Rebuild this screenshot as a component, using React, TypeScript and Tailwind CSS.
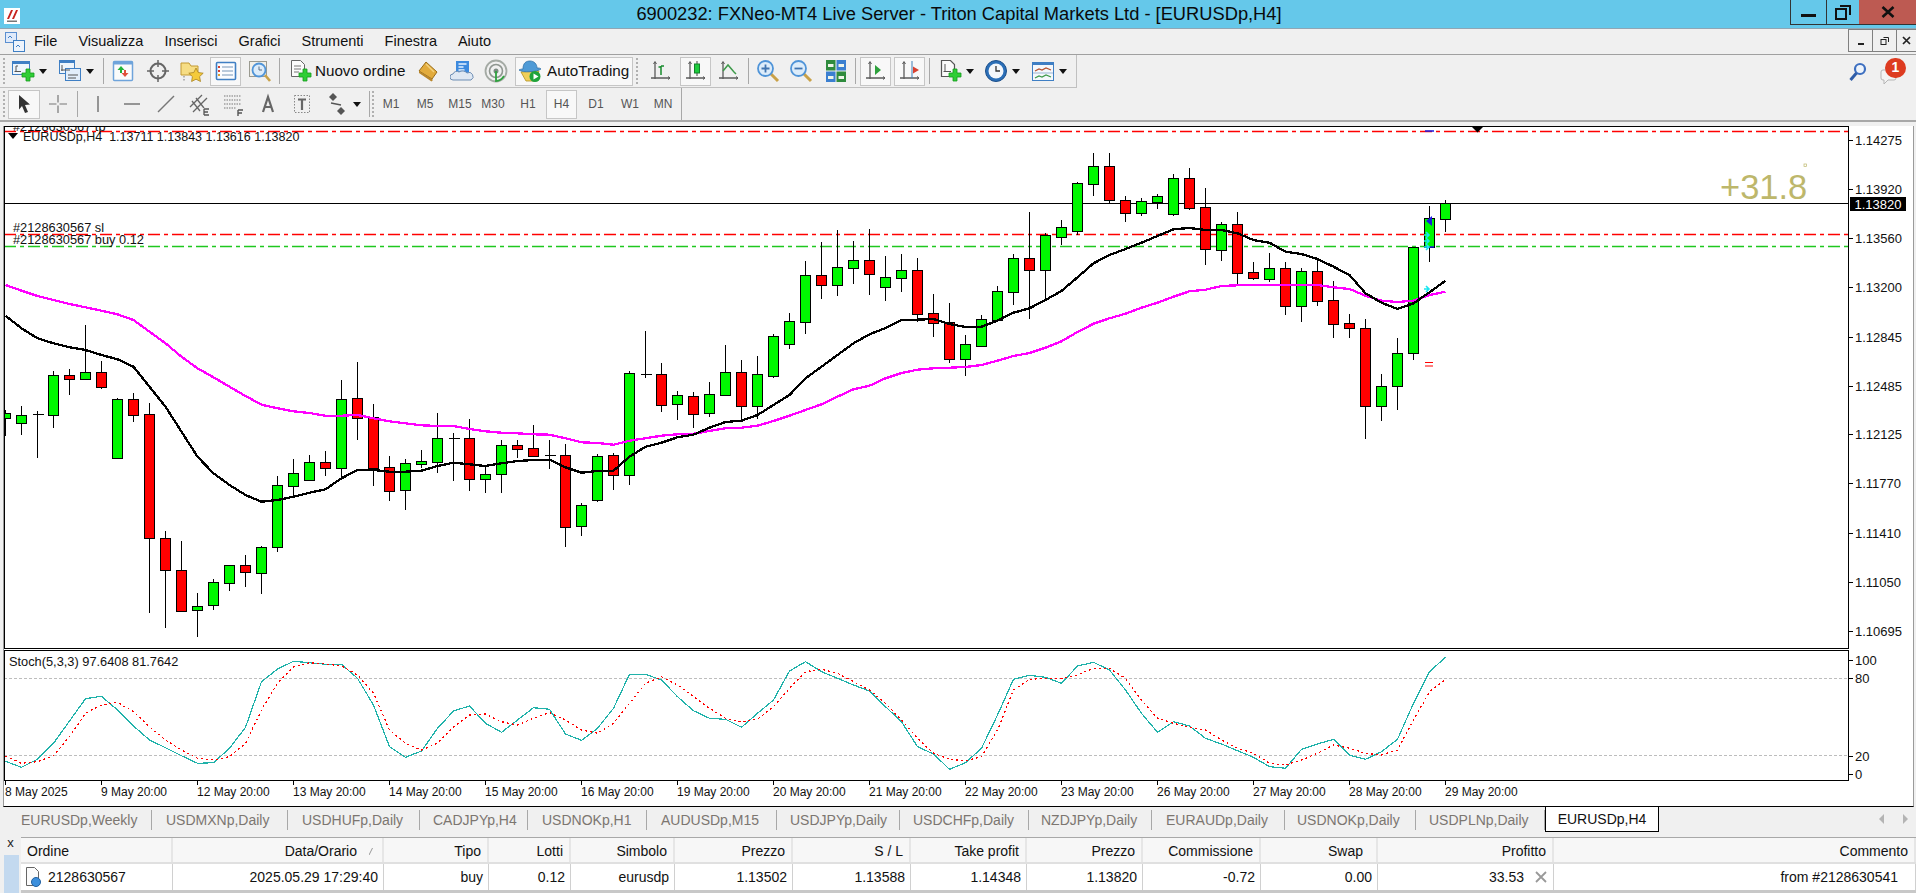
import type { ReactNode } from "react"

type Bar = [number, number, number, number, number]

// wick top, body top, body bottom, wick bottom, 1 = bull
const barsA: Bar[] = [
  [450, 460, 475, 527, 1], [438, 466, 488, 524, 1], [453, 463, 466, 594, 2], [334, 346, 464, 504, 1],
  [327, 346, 356, 405, 0], [195, 337, 356, 359, 1], [303, 337, 380, 387, 0], [414, 418, 593, 593, 1],
  [399, 418, 464, 486, 0], [430, 463, 835, 1058, 0], [813, 835, 931, 1104, 0], [843, 931, 1052, 1056, 0],
  [999, 1039, 1049, 1131, 1], [957, 967, 1036, 1050, 1], [916, 916, 970, 993, 1], [885, 916, 937, 981, 0],
  [858, 862, 938, 1002, 1], [648, 676, 862, 876, 1], [597, 640, 677, 708, 1], [585, 607, 661, 661, 1],
  [573, 607, 623, 648, 0], [360, 418, 623, 655, 1], [306, 415, 473, 540, 0], [432, 472, 623, 678, 0],
  [588, 622, 692, 723, 0], [597, 610, 689, 749, 1], [570, 604, 611, 624, 1], [459, 535, 605, 639, 1],
  [519, 535, 536, 663, 2], [477, 535, 656, 693, 0], [618, 643, 656, 699, 1], [541, 556, 641, 699, 1],
  [540, 556, 566, 595, 0], [495, 565, 587, 590, 0], [540, 586, 587, 627, 2], [552, 586, 800, 861, 0],
  [729, 736, 797, 828, 1], [583, 589, 719, 725, 1], [579, 586, 644, 690, 0], [334, 340, 644, 675, 1],
]

const barsB: Bar[] = [
  [603, 731, 733, 744, 2], [699, 733, 824, 846, 0], [783, 796, 821, 870, 1], [786, 799, 851, 894, 0],
  [756, 793, 848, 861, 1], [645, 727, 795, 798, 1], [690, 727, 829, 870, 0], [678, 733, 829, 866, 1],
  [613, 619, 738, 744, 1], [549, 574, 641, 657, 1], [393, 436, 575, 612, 1], [336, 436, 464, 507, 0],
  [300, 412, 464, 498, 1], [333, 391, 413, 462, 1], [297, 391, 431, 495, 0], [378, 442, 470, 513, 1],
  [372, 421, 443, 486, 1], [384, 421, 551, 576, 0], [492, 550, 578, 621, 0], [519, 577, 686, 699, 0],
  [615, 643, 686, 738, 1], [555, 568, 647, 647, 1], [468, 484, 569, 569, 1], [372, 385, 485, 525, 1],
  [246, 385, 419, 567, 0], [309, 316, 419, 507, 1], [270, 292, 320, 345, 1], [156, 160, 302, 314, 1],
  [69, 109, 161, 198, 1], [69, 109, 209, 220, 0], [198, 211, 248, 276, 0], [205, 214, 248, 258, 1],
  [193, 199, 215, 237, 1], [132, 145, 251, 258, 1], [114, 145, 233, 240, 0], [174, 232, 356, 405, 0],
  [276, 283, 359, 393, 1], [246, 283, 428, 462, 0], [396, 427, 443, 450, 0], [369, 415, 446, 456, 1],
  [396, 415, 529, 555, 0], [414, 424, 529, 576, 1], [390, 424, 512, 528, 0], [453, 511, 581, 624, 0],
  [552, 580, 593, 624, 0], [567, 595, 827, 927, 0], [732, 769, 827, 873, 1], [624, 670, 769, 840, 1],
  [352, 352, 670, 690, 1], [228, 265, 352, 396, 1], [210, 219, 266, 306, 1],
]

const blackA = [167, 205, 235, 250, 262, 270, 285, 298, 320, 380, 440, 515, 590, 640, 675, 705, 725, 720, 710, 698, 688, 655, 630, 630, 635, 635, 632, 618, 608, 613, 618, 610, 603, 600, 599, 622, 638, 633, 632, 590]
const blackB = [950, 938, 922, 914, 893, 876, 872, 855, 825, 795, 745, 710, 675, 640, 613, 594, 570, 569, 567, 582, 591, 590, 572, 548, 535, 510, 483, 442, 400, 375, 357, 338, 318, 298, 294, 300, 300, 310, 330, 338, 365, 372, 387, 410, 435, 490, 518, 537, 520, 487, 452]
const pinkA = [75, 92, 108, 120, 132, 142, 152, 163, 180, 215, 250, 290, 325, 352, 380, 408, 434, 445, 454, 459, 467, 467, 465, 475, 484, 490, 496, 498, 498, 507, 514, 518, 520, 523, 524, 535, 547, 549, 554, 542]
const pinkB = [925, 917, 913, 911, 903, 895, 893, 887, 873, 857, 840, 823, 800, 778, 767, 745, 729, 719, 715, 713, 711, 705, 692, 678, 669, 653, 634, 606, 581, 565, 551, 533, 518, 500, 484, 479, 468, 466, 465, 465, 465, 465, 465, 472, 477, 497, 512, 516, 512, 495, 485]

const stochMain = [364, 382, 358, 310, 243, 176, 169, 210, 258, 300, 323, 347, 370, 368, 325, 262, 125, 87, 64, 68, 73, 73, 115, 195, 320, 352, 333, 265, 213, 198, 250, 277, 240, 203, 208, 282, 301, 265, 205, 103, 103, 120, 170, 212, 235, 238, 262, 220, 180, 93, 65, 95, 115, 135, 153, 200, 245, 320, 342, 388, 368, 325, 225, 118, 106, 112, 130, 78, 67, 90, 150, 220, 277, 245, 258, 295, 312, 332, 352, 380, 385, 328, 312, 298, 346, 358, 335, 298, 190, 95, 52]
const stochSignal = [348, 370, 365, 347, 290, 220, 195, 187, 215, 260, 300, 330, 355, 360, 350, 310, 210, 130, 80, 68, 72, 78, 105, 160, 270, 310, 330, 310, 260, 225, 222, 245, 255, 235, 218, 240, 270, 280, 250, 190, 130, 110, 135, 170, 205, 235, 245, 238, 200, 145, 95, 88, 100, 125, 150, 190, 240, 295, 340, 358, 362, 350, 270, 150, 118, 115, 115, 105, 85, 85, 115, 180, 235, 250, 262, 270, 300, 325, 340, 370, 375, 360, 340, 315, 325, 340, 345, 330, 240, 155, 118]

const barX = (i: number) => Math.floor(5.3 + 16 * i) + 0.5

const polyline = (a: number[], baseA: number, b: number[] = [], baseB = 0) =>
  [...a.map((v) => v / 3 + baseA), ...b.map((v) => v / 3 + baseB)].map((y, i) => `${barX(i)},${y.toFixed(1)}`).join(" ")

const priceLabels: [string, number][] = [
  ["1.14275", 140], ["1.13920", 189], ["1.13560", 238], ["1.13200", 287], ["1.12845", 337],
  ["1.12485", 386], ["1.12125", 434], ["1.11770", 483], ["1.11410", 533], ["1.11050", 582], ["1.10695", 631],
]

const timeLabels = ["8 May 2025", "9 May 20:00", "12 May 20:00", "13 May 20:00", "14 May 20:00", "15 May 20:00", "16 May 20:00", "19 May 20:00", "20 May 20:00", "21 May 20:00", "22 May 20:00", "23 May 20:00", "26 May 20:00", "27 May 20:00", "28 May 20:00", "29 May 20:00"]

const tabs: [string, string][] = [
  ["EURUSDp,Weekly", "w-[152px] pl-[21px]"], ["USDMXNp,Daily", "w-[136px] pl-[14px]"], ["USDHUFp,Daily", "w-[132px] pl-[14px]"],
  ["CADJPYp,H4", "w-[108px] pl-[13px]"], ["USDNOKp,H1", "w-[119px] pl-[14px]"], ["AUDUSDp,M15", "w-[130px] pl-[14px]"],
  ["USDJPYp,Daily", "w-[123px] pl-[13px]"], ["USDCHFp,Daily", "w-[129px] pl-[13px]"], ["NZDJPYp,Daily", "w-[123px] pl-[12px]"],
  ["EURAUDp,Daily", "w-[133px] pl-[14px]"], ["USDNOKp,Daily", "w-[131px] pl-[12px]"], ["USDPLNp,Daily", "w-[129px] pl-[13px]"],
]

const menus = ["File", "Visualizza", "Inserisci", "Grafici", "Strumenti", "Finestra", "Aiuto"]

const columns: [string, string, string][] = [
  ["Ordine", "2128630567", "w-[152px]"], ["Data/Orario", "2025.05.29 17:29:40", "w-[211px]"], ["Tipo", "buy", "w-[105px]"],
  ["Lotti", "0.12", "w-[82px]"], ["Simbolo", "eurusdp", "w-[104px]"], ["Prezzo", "1.13502", "w-[118px]"],
  ["S / L", "1.13588", "w-[118px]"], ["Take profit", "1.14348", "w-[116px]"], ["Prezzo", "1.13820", "w-[116px]"],
  ["Commissione", "-0.72", "w-[118px]"], ["Swap", "0.00", "w-[117px]"], ["Profitto", "33.53", "w-[176px]"], ["Commento", "from #2128630541", "flex-1"],
]

function Caret() {
  return (
    <svg width="8" height="5" viewBox="0 0 8 5" className="mx-[1px]">
      <path d="M0 0h8L4 5z" fill="#111" />
    </svg>
  )
}

function Grip({ className = "" }: { className?: string }) {
  return <div className={`h-[26px] w-[3px] border-l-2 border-dotted border-[#b0b0b0] ${className}`} />
}

function Sep({ className = "" }: { className?: string }) {
  return <div className={`h-[26px] w-px bg-[#a8a8a8] ${className}`} />
}

function Btn({ children, active, className = "" }: { children?: ReactNode; active?: boolean; className?: string }) {
  return (
    <div
      className={`flex h-[29px] w-[30px] shrink-0 items-center justify-center ${
        active ? "border border-[#c6c6c6] bg-[#f8f8f8]" : ""
      } ${className}`}
    >
      {children}
    </div>
  )
}

const Ico = ({ children }: { children: ReactNode }) => (
  <svg width="24" height="24" viewBox="0 0 24 24" fill="none">
    {children}
  </svg>
)

const plus = <path d="M15 10h4v4h4v4h-4v4h-4v-4h-4v-4h4z" fill="#2fce35" stroke="#149a1c" strokeWidth="0.8" />

const Axes = ({ children }: { children?: ReactNode }) => (
  <Ico>
    <path d="M6 3v17M2 19h19" stroke="#5b5b5b" strokeWidth="1.3" />
    <path d="M4.5 5 6 2.5 7.500 5M19 17.500l2 1.500-2 1.500" stroke="#5b5b5b" />
    {children}
  </Ico>
)

const icons = {
  newChart: (
    <Ico>
      <rect x="1.500" y="2.500" width="17" height="13" fill="#eef5fc" stroke="#3f7fc4" />
      <rect x="1.500" y="2.500" width="17" height="2.500" fill="#3f7fc4" />
      <path d="M5 7v6M3.500 12.500H10M5 7h2" stroke="#555" />
      {plus}
    </Ico>
  ),
  profiles: (
    <Ico>
      <rect x="1.500" y="1.500" width="15" height="13" fill="#eef5fc" stroke="#3f7fc4" />
      <rect x="1.500" y="1.500" width="15" height="2.500" fill="#3f7fc4" />
      <rect x="7.500" y="9.500" width="15" height="12" fill="#e2eefb" stroke="#3f7fc4" />
      <path d="M4 6v6M3 11h9M10 16h10M10 19h8" stroke="#555" />
    </Ico>
  ),
  market: (
    <Ico>
      <rect x="2.500" y="2.500" width="19" height="19" rx="1" fill="#fbfbfb" stroke="#6fa4db" strokeWidth="1.500" />
      <rect x="2.500" y="2.500" width="19" height="3" fill="#6fa4db" />
      <path d="M10 7l-3.500 4H9v3h2v-3h2.500z" fill="#22b43a" />
      <path d="M14 18l3.500-4H15v-3h-2v3h-2.500z" fill="#e0503c" />
    </Ico>
  ),
  crosshair: (
    <Ico>
      <circle cx="12" cy="12" r="7.500" stroke="#666" strokeWidth="2" />
      <path d="M12 1v7M12 16v7M1 12h7M16 12h7" stroke="#666" strokeWidth="1.500" />
    </Ico>
  ),
  folderStar: (
    <Ico>
      <path d="M1 4h8l2 3h7v9H1z" fill="#f6dd84" stroke="#c39a33" />
      <path d="M16 9l2.200 4.500 5 .7-3.600 3.400.9 4.900-4.500-2.300-4.400 2.300.8-4.900-3.600-3.400 5-.7z" fill="#f4ca3a" stroke="#a98320" strokeWidth="0.800" />
      <path d="M4 17v6" stroke="#777" strokeDasharray="1.500 1.500" />
    </Ico>
  ),
  navigator: (
    <Ico>
      <rect x="2.500" y="3.500" width="19" height="17" rx="1" fill="#fafcff" stroke="#3f7fc4" strokeWidth="1.600" />
      <path d="M5 7v2M5 11v2" stroke="#d8402f" strokeWidth="2" />
      <path d="M5 15v2" stroke="#e0a030" strokeWidth="2" />
      <path d="M8 8h11M8 12h11M8 16h11" stroke="#7795b8" strokeWidth="1.200" />
    </Ico>
  ),
  terminal: (
    <Ico>
      <rect x="1.500" y="2.500" width="17" height="15" fill="#f1efe8" stroke="#9a9a90" />
      <path d="M17 16l5 6" stroke="#c9a148" strokeWidth="2.600" />
      <circle cx="11" cy="11" r="6.500" fill="#dcecfa" stroke="#4f94d8" strokeWidth="1.800" />
      <path d="M11 7.500V11h3" stroke="#5b6f86" />
    </Ico>
  ),
  order: (
    <Ico>
      <path d="M3.500 1.500h9l4 4v12h-13z" fill="#fbfbfb" stroke="#666" />
      <path d="M6 7h7M6 10h7M6 13h5" stroke="#777" />
      {plus}
    </Ico>
  ),
  gold: (
    <Ico>
      <path d="M10 3l11 10-5 7L3 12z" fill="#e2ab3c" stroke="#9a6d18" />
      <path d="M3 12l13 8 1 1-1.500 1.500L3 14z" fill="#b9862a" />
      <path d="M10 5l8 8" stroke="#f4d27c" strokeWidth="1.500" />
    </Ico>
  ),
  cloud: (
    <Ico>
      <path d="M6 2h13v14H6z" fill="#3d8ade" />
      <path d="M8.500 5h8M8.500 8h5M8.500 11h6" stroke="#e6f2ff" strokeWidth="1.400" />
      <path d="M3 21a3 3 0 0 1 0-6 4 4 0 0 1 6-2 6 6 0 0 1 8 1 3.500 3.500 0 0 1 4 7z" fill="#dfe8f3" stroke="#6d8db3" />
    </Ico>
  ),
  signal: (
    <Ico>
      <circle cx="12" cy="12" r="10.500" stroke="#a4aaa4" strokeWidth="1.800" />
      <circle cx="12" cy="12" r="6.500" stroke="#8f9690" strokeWidth="1.600" />
      <circle cx="12" cy="12" r="2.500" fill="#7d8a82" />
      <path d="M12 12v10c3 0 6-2 8-5" stroke="#2fa23f" strokeWidth="1.800" />
    </Ico>
  ),
  auto: (
    <Ico>
      <path d="M3 13l18-1-4 10H8z" fill="#f0cf5a" stroke="#b0901f" strokeWidth="0.800" />
      <path d="M1 11c2-1 3-1 4-1 0-6 3-8 7-8s7 3 7 7c2 0 3 0 4 1-4 3-18 4-22 1z" fill="#4e9ad6" stroke="#3273aa" strokeWidth="0.800" />
      <circle cx="17" cy="17.500" r="5.500" fill="#1fa33a" />
      <path d="M15.500 14.500v6l5-3z" fill="#fff" />
    </Ico>
  ),
  bars: (
    <Axes>
      <path d="M12 7v9M12 8H9.500M12 7h3" stroke="#178a2c" strokeWidth="1.500" />
    </Axes>
  ),
  candles: (
    <Axes>
      <path d="M13 2v15" stroke="#444" />
      <rect x="10.500" y="5" width="5" height="9" fill="#1dcc3c" stroke="#12802a" />
    </Axes>
  ),
  line: (
    <Axes>
      <path d="M6 12l5-6 6 7 2 2" stroke="#3e9a4a" strokeWidth="1.500" />
    </Axes>
  ),
  zoomIn: (
    <Ico>
      <path d="M15 15l7 7" stroke="#c9a148" strokeWidth="3" />
      <circle cx="9.500" cy="9.500" r="7.500" fill="#dcecfa" stroke="#4f94d8" strokeWidth="1.800" />
      <path d="M5.500 9.500h8M9.500 5.500v8" stroke="#3f74b0" strokeWidth="1.800" />
    </Ico>
  ),
  zoomOut: (
    <Ico>
      <path d="M15 15l7 7" stroke="#c9a148" strokeWidth="3" />
      <circle cx="9.500" cy="9.500" r="7.500" fill="#dcecfa" stroke="#4f94d8" strokeWidth="1.800" />
      <path d="M5.500 9.500h8" stroke="#3f74b0" strokeWidth="1.800" />
    </Ico>
  ),
  tile: (
    <Ico>
      <rect x="2" y="1" width="9.500" height="10.500" fill="#2f8b3d" />
      <rect x="12.500" y="1" width="9.500" height="10.500" fill="#3b7fd0" />
      <rect x="2" y="12.500" width="9.500" height="10.500" fill="#3b7fd0" />
      <rect x="12.500" y="12.500" width="9.500" height="10.500" fill="#2f8b3d" />
      <path d="M4 5h5.500v3H4zM14.500 5H20v3h-5.500zM4 17h5.500v3H4zM14.500 17H20v3h-5.500z" fill="#eef5ea" />
    </Ico>
  ),
  scroll: (
    <Axes>
      <path d="M11 6l6 5-6 5z" fill="#2da13c" />
    </Axes>
  ),
  shift: (
    <Axes>
      <path d="M14 2v17" stroke="#3e7fb8" />
      <path d="M21 11l-6-3.500v7z" fill="#d8402f" />
    </Axes>
  ),
  indicators: (
    <Ico>
      <path d="M3.500 1.500h9l4 4v12h-13z" fill="#fafafa" stroke="#555" strokeWidth="1.200" />
      <path d="M7 5v8M5.500 12.500H13" stroke="#555" />
      {plus}
    </Ico>
  ),
  clock: (
    <Ico>
      <circle cx="12" cy="12" r="10.500" fill="#2b6fb8" stroke="#1c4f8a" />
      <circle cx="12" cy="12" r="7.500" fill="#f4f7fb" />
      <path d="M12 7v5h4" stroke="#333" strokeWidth="1.300" />
    </Ico>
  ),
  template: (
    <Ico>
      <rect x="1.500" y="3.500" width="21" height="18" fill="#f5f8fc" stroke="#3f7fc4" />
      <rect x="1.500" y="3.500" width="21" height="2.500" fill="#3f7fc4" />
      <path d="M4 12l4-2 3 1 4-2 5 2" stroke="#b5502f" strokeWidth="1.200" />
      <path d="M2 14h20" stroke="#9bb6d3" />
      <path d="M4 19l4-2 3 1 4-2 5 2" stroke="#3e9a4a" strokeWidth="1.200" />
    </Ico>
  ),
  cursor: (
    <Ico>
      <path d="M7 3l11 9.500-5 .5 3 7-3 1-3-7-3 3.500z" fill="#333" />
    </Ico>
  ),
  cross: (
    <Ico>
      <path d="M12 3v7.500M12 13.500V21M3 12h7.500M13.500 12H21" stroke="#777" strokeWidth="1.200" />
    </Ico>
  ),
  vline: (
    <Ico>
      <path d="M12 4v16" stroke="#777" strokeWidth="1.500" />
    </Ico>
  ),
  hline: (
    <Ico>
      <path d="M4 12h16" stroke="#777" strokeWidth="1.500" />
    </Ico>
  ),
  trend: (
    <Ico>
      <path d="M4 20L20 4" stroke="#777" strokeWidth="1.500" />
    </Ico>
  ),
  channel: (
    <Ico>
      <path d="M2 15l12-12M5 20l14-14M4 9l8 10M8 6l8 10" stroke="#666" strokeWidth="1.300" />
      <path d="M16 17h5M16 17v6M16 20h4M16 23h5" stroke="#555" strokeWidth="1.300" />
    </Ico>
  ),
  fib: (
    <Ico>
      <path d="M3 4h17M3 8h17M3 12h17M3 16h12" stroke="#777" strokeDasharray="1.500 1" />
      <path d="M17 18h5M17 18v6M17 21h4" stroke="#555" strokeWidth="1.400" />
    </Ico>
  ),
  textA: (
    <Ico>
      <path d="M7 20l5-15 5 15M9 15h6" stroke="#666" strokeWidth="2.200" />
    </Ico>
  ),
  textT: (
    <Ico>
      <rect x="4.500" y="3.500" width="15" height="17" stroke="#888" strokeDasharray="1.500 1.500" />
      <path d="M8 7.500h8M12 7.500V18" stroke="#666" strokeWidth="2.200" />
    </Ico>
  ),
  arrows: (
    <Ico>
      <path d="M8 1l4 4-4 4-4-4zM16 15l4 4-4 4-4-4z" fill="#555" />
      <path d="M6 11l10 2" stroke="#555" strokeWidth="1.400" />
    </Ico>
  ),
}

function TitleBar() {
  return (
    <div className="relative flex h-[29px] shrink-0 items-start border-b border-[#8fa6b5] bg-[#65c8ea]">
      <div className="ml-[4px] mt-[8px] flex h-[16px] w-[16px] items-center justify-center bg-white">
        <svg width="14" height="14" viewBox="0 0 14 14">
          <path d="M2 10L6 1h2L4 10zM7 10l4-9h2L9 10z" fill="#c8231e" />
          <rect x="2" y="11.500" width="10" height="1.500" fill="#777" />
        </svg>
      </div>
      <div className="flex-1 pt-[2px] pl-[108px] text-center text-[18.300px] leading-[24px] text-[#0a0a0a]">
        6900232: FXNeo-MT4 Live Server - Triton Capital Markets Ltd - [EURUSDp,H4]
      </div>
      <div className="flex h-[25px]">
        <div className="flex w-[36px] items-end justify-center border-b border-l border-[#333] pb-[7px]">
          <div className="h-[3px] w-[15px] bg-[#111]" />
        </div>
        <div className="flex w-[33px] items-center justify-center border-b border-l border-[#333]">
          <svg width="16" height="15" viewBox="0 0 16 15" fill="none">
            <rect x="1" y="4" width="10" height="10" stroke="#111" strokeWidth="2" />
            <path d="M5 1h10v9" stroke="#111" strokeWidth="2" />
          </svg>
        </div>
        <div className="flex w-[57px] items-center justify-center border-b border-[#333] bg-[#bd5a52]">
          <svg width="14" height="12" viewBox="0 0 14 12">
            <path d="M1.500 1l11 10M12.500 1l-11 10" stroke="#111" strokeWidth="2.600" />
          </svg>
        </div>
      </div>
    </div>
  )
}

function MenuBar() {
  return (
    <div className="flex h-[25px] shrink-0 items-center bg-[#f0f0f0]">
      <svg width="22" height="22" viewBox="0 0 22 22" className="ml-[4px]" fill="none">
        <rect x="1.500" y="1.500" width="11" height="10" fill="#dfeafa" stroke="#5b8fd0" />
        <rect x="9.500" y="9.500" width="11" height="11" fill="#eef4fc" stroke="#3f7fc4" />
        <path d="M4 7l2-2 2 2M12 16l2-2 2 2" stroke="#3f7fc4" />
      </svg>
      <div className="ml-[8px] flex gap-[21px] text-[14.500px] text-[#111]">
        {menus.map((m) => (
          <span key={m}>{m}</span>
        ))}
      </div>
      <div className="ml-auto flex h-[23px] self-start">
        <div className="flex h-[23px] w-[24px] items-center justify-center border border-r-0 border-[#808080]">
          <div className="mt-[6px] h-[2px] w-[6px] bg-[#222]" />
        </div>
        <div className="flex h-[23px] w-[24px] items-center justify-center border border-r-0 border-[#808080]">
          <svg width="10" height="10" viewBox="0 0 10 10" fill="none">
            <rect x="1" y="3.500" width="5" height="5" stroke="#222" />
            <path d="M3.500 1.500h5v4.500" stroke="#222" />
          </svg>
        </div>
        <div className="flex h-[23px] w-[20px] items-center justify-center border border-r-0 border-[#808080]">
          <svg width="9" height="9" viewBox="0 0 9 9">
            <path d="M1 1l7 7M8 1L1 8" stroke="#222" strokeWidth="1.700" />
          </svg>
        </div>
      </div>
    </div>
  )
}

function MainToolbar() {
  return (
    <div className="flex h-[34px] shrink-0 border-t border-[#a0a0a0] bg-[#f0f0f0]">
      <div className="flex w-[1077px] items-center border-r border-b border-[#c0c0c0] pl-[3px] text-[15.200px] text-[#111]">
        <Grip className="mr-[2px]" />
        <Btn>{icons.newChart}</Btn>
        <Caret />
        <Btn className="ml-[7px]">{icons.profiles}</Btn>
        <Caret />
        <Sep className="ml-[8px]" />
        <Btn className="ml-[4px]">{icons.market}</Btn>
        <Btn className="ml-[5px]">{icons.crosshair}</Btn>
        <Btn className="ml-[4px]">{icons.folderStar}</Btn>
        <Btn active className="ml-[3px] w-[31px]">{icons.navigator}</Btn>
        <Btn className="ml-[4px]">{icons.terminal}</Btn>
        <Sep className="ml-[4px]" />
        <Btn className="ml-[5px]">{icons.order}</Btn>
        <span className="w-[95px] whitespace-nowrap">Nuovo ordine</span>
        <Btn className="ml-[3px]">{icons.gold}</Btn>
        <Btn className="ml-[4px]">{icons.cloud}</Btn>
        <Btn className="ml-[4px]">{icons.signal}</Btn>
        <div className="ml-[4px] flex h-[29px] w-[118px] items-center border border-[#c6c6c6] bg-[#f8f8f8]">
          <span className="ml-[2px]">{icons.auto}</span>
          <span className="ml-[5px] whitespace-nowrap">AutoTrading</span>
        </div>
        <Grip className="ml-[3px] mr-[6px]" />
        <Btn className="ml-[1px]">{icons.bars}</Btn>
        <Btn active className="ml-[4px] w-[31px]">{icons.candles}</Btn>
        <Btn className="ml-[3px]">{icons.line}</Btn>
        <Sep className="ml-[4px]" />
        <Btn className="ml-[4px]">{icons.zoomIn}</Btn>
        <Btn className="ml-[3px]">{icons.zoomOut}</Btn>
        <Btn className="ml-[5px]">{icons.tile}</Btn>
        <Sep className="ml-[4px]" />
        <Btn active className="ml-[4px] w-[31px]">{icons.scroll}</Btn>
        <Btn active className="ml-[3px] w-[31px]">{icons.shift}</Btn>
        <Sep className="ml-[4px]" />
        <Btn className="ml-[5px]">{icons.indicators}</Btn>
        <Caret />
        <Btn className="ml-[6px]">{icons.clock}</Btn>
        <Caret />
        <Btn className="ml-[7px]">{icons.template}</Btn>
        <Caret />
      </div>
      <div className="ml-auto mr-[10px] flex items-center gap-[9px]">
        <svg width="22" height="22" viewBox="0 0 22 22" fill="none" className="mr-[2px]">
          <circle cx="13" cy="8" r="5" stroke="#3d6fc0" strokeWidth="2.200" fill="#eef4fb" />
          <path d="M9.500 12L3.500 19" stroke="#2f5da8" strokeWidth="3" />
        </svg>
        <div className="relative h-[24px] w-[26px]">
          <svg width="18" height="16" viewBox="0 0 18 16" fill="none" className="absolute left-0 top-[9px]">
            <path d="M3 1h11a2 2 0 0 1 2 2v6a2 2 0 0 1-2 2H8l-4 4v-4H3a2 2 0 0 1-2-2V3a2 2 0 0 1 2-2z" fill="#f4f4f4" stroke="#b5b5b5" />
          </svg>
          <div className="absolute left-[5px] top-[-2px] flex h-[20px] w-[21px] items-center justify-center rounded-full bg-[#dd3b20] text-[14px] font-bold text-white">
            1
          </div>
        </div>
      </div>
    </div>
  )
}

function DrawToolbar() {
  return (
    <div className="flex h-[34px] shrink-0 border-b-2 border-[#a8a8a8] bg-[#f0f0f0]">
      <div className="flex w-[682px] items-center border-r border-[#a8a8a8] pl-[3px] text-[12px] text-[#555]">
        <Grip className="mr-[2px]" />
        <Btn active className="w-[32px]">{icons.cursor}</Btn>
        <Btn className="ml-[3px]">{icons.cross}</Btn>
        <Sep className="ml-[4px]" />
        <Btn className="ml-[5px]">{icons.vline}</Btn>
        <Btn className="ml-[4px]">{icons.hline}</Btn>
        <Btn className="ml-[4px]">{icons.trend}</Btn>
        <Btn className="ml-[4px]">{icons.channel}</Btn>
        <Btn className="ml-[3px]">{icons.fib}</Btn>
        <Btn className="ml-[5px]">{icons.textA}</Btn>
        <Btn className="ml-[4px]">{icons.textT}</Btn>
        <Btn className="ml-[5px]">{icons.arrows}</Btn>
        <Caret />
        <Sep className="ml-[7px]" />
        <Grip className="ml-[2px]" />
        <Btn className="ml-[1px]">M1</Btn>
        <Btn className="ml-[4px]">M5</Btn>
        <Btn className="ml-[5px]">M15</Btn>
        <Btn className="ml-[3px]">M30</Btn>
        <Btn className="ml-[5px]">H1</Btn>
        <Btn active className="ml-[3px] w-[31px]">H4</Btn>
        <Btn className="ml-[4px]">D1</Btn>
        <Btn className="ml-[4px]">W1</Btn>
        <Btn className="ml-[3px]">MN</Btn>
      </div>
    </div>
  )
}

function AxisLabel({ text, y, top }: { text: string; y: number; top: number }) {
  return (
    <div className="absolute left-0 flex h-[16px] items-center text-[13px] text-[#111]" style={{ top: y - top - 8 }}>
      <div className="h-px w-[4px] bg-black" />
      <span className="ml-[2px] leading-none">{text}</span>
    </div>
  )
}

function CandlePane() {
  const bars = [
    ...barsA.map((b) => ({ v: b, base: 260 })),
    ...barsB.map((b) => ({ v: b, base: 130 })),
  ]
  return (
    <div className="flex h-[523px] shrink-0">
      <svg width="1845" height="523" viewBox="4 126 1845 523" className="block shrink-0 text-[12.800px]">
        <line x1="4" x2="1849" y1="203.500" y2="203.500" stroke="#000" />
        <line x1="4" x2="1849" y1="131.500" y2="131.500" stroke="#f00" strokeWidth="1.300" strokeDasharray="12 4 4 4" />
        <line x1="4" x2="1849" y1="234.500" y2="234.500" stroke="#f00" strokeWidth="1.300" strokeDasharray="12 4 4 4" />
        <line x1="4" x2="1849" y1="246.500" y2="246.500" stroke="#1fc81f" strokeWidth="1.300" strokeDasharray="12 4 4 4" />
        <text x="13" y="131" fill="#111">#2128630567 tp</text>
        <text x="13" y="232" fill="#111">#2128630567 sl</text>
        <text x="13" y="244" fill="#111">#2128630567 buy 0.12</text>
        {bars.map(({ v, base }, i) => {
          const x = barX(i)
          const [hi, top, bot, lo, kind] = v
          const t = Math.round(top / 3 + base)
          const h = Math.max(Math.round(bot / 3 + base) - t, 1)
          return (
            <g key={i} shapeRendering="crispEdges">
              <line x1={x} x2={x} y1={hi / 3 + base} y2={lo / 3 + base} stroke="#000" />
              {kind === 2 ? (
                <line x1={x - 5} x2={x + 6} y1={t + 0.5} y2={t + 0.5} stroke="#000" />
              ) : (
                <rect x={x - 5} y={t + 0.5} width="10" height={h} fill={kind === 1 ? "#00f800" : "#ff0000"} stroke="#000" strokeWidth="1.200" />
              )}
            </g>
          )
        })}
        <polyline points={polyline(pinkA, 260, pinkB, 130)} fill="none" stroke="#ff00ff" strokeWidth="2.300" shapeRendering="crispEdges" />
        <polyline points={polyline(blackA, 260, blackB, 130)} fill="none" stroke="#000" strokeWidth="2.300" shapeRendering="crispEdges" />
        <path d="M1424 221l6-5v10z" fill="#1a1ae0" transform="translate(2 0)" />
        <path d="M1425 247h9M1425 131h9" stroke="#1a1ae0" strokeWidth="1.500" />
        <path d="M1424 235h4m-2-3l3 3-3 3M1424 241h4m-2-3l3 3-3 3M1424 247h4m-2-3l3 3-3 3M1424 289h4m-2-3l3 3-3 3" stroke="#19e6f0" strokeWidth="1.600" fill="none" />
        <path d="M1425 362.500h8M1425 366h8" stroke="#f00" strokeWidth="1.200" />
        <path d="M1471 126h13l-6.500 6.500z" fill="#000" />
        <path d="M8 133h10l-5 6z" fill="#000" />
        <text x="23" y="141" fill="#111" fontSize="12.500" xmlSpace="preserve">EURUSDp,H4  1.13711 1.13843 1.13616 1.13820</text>
        <text x="1720" y="199" fill="#bdb76b" fontSize="34.500">+31.8</text>
        <rect x="1804" y="164" width="2.500" height="2.500" fill="none" stroke="#bdb76b" strokeWidth="0.700" />
        <line x1="4" x2="1849" y1="126.500" y2="126.500" stroke="#000" />
        <line x1="4" x2="1849" y1="648.500" y2="648.500" stroke="#000" />
        <line x1="4.500" x2="4.500" y1="126" y2="649" stroke="#000" />
        <line x1="1848.500" x2="1848.500" y1="126" y2="649" stroke="#000" />
      </svg>
      <div className="relative flex-1">
        {priceLabels.map(([t, y]) => (
          <AxisLabel key={t} text={t} y={y} top={126} />
        ))}
        <div className="absolute left-[1px] top-[71px] flex h-[14px] w-[56px] items-center justify-center bg-black text-[13px] leading-none text-white">
          1.13820
        </div>
      </div>
    </div>
  )
}

function StochPane() {
  return (
    <div className="mt-px flex h-[131px] shrink-0">
      <svg width="1845" height="131" viewBox="4 650 1845 131" className="block shrink-0 text-[12.800px]">
        <line x1="4" x2="1849" y1="678.500" y2="678.500" stroke="#bdbdbd" strokeDasharray="3 2" />
        <line x1="4" x2="1849" y1="755.500" y2="755.500" stroke="#bdbdbd" strokeDasharray="3 2" />
        <polyline points={polyline(stochMain, 640)} fill="none" stroke="#20b2aa" strokeWidth="1.200" shapeRendering="crispEdges" />
        <polyline points={polyline(stochSignal, 640)} fill="none" stroke="#ff0000" strokeWidth="1.200" strokeDasharray="2 3" shapeRendering="crispEdges" />
        <text x="9" y="666" fill="#111">Stoch(5,3,3) 97.6408 81.7642</text>
        <line x1="4" x2="1849" y1="650.500" y2="650.500" stroke="#000" />
        <line x1="4" x2="1849" y1="780.500" y2="780.500" stroke="#000" />
        <line x1="4.500" x2="4.500" y1="650" y2="781" stroke="#000" />
        <line x1="1848.500" x2="1848.500" y1="650" y2="781" stroke="#000" />
      </svg>
      <div className="relative flex-1">
        {([["100", 660], ["80", 678], ["20", 756], ["0", 774]] as [string, number][]).map(([t, y]) => (
          <AxisLabel key={t} text={t} y={y} top={650} />
        ))}
      </div>
    </div>
  )
}

function TimeAxis() {
  return (
    <div className="flex h-[25px] shrink-0 pl-[1px] text-[12px] text-[#111]">
      {timeLabels.map((t) => (
        <div key={t} className="flex w-[96px] shrink-0 flex-col items-start">
          <div className="h-[4px] w-px bg-black" />
          <span className="whitespace-nowrap leading-[14px]">{t}</span>
        </div>
      ))}
    </div>
  )
}

function ChartWindow() {
  return (
    <div className="flex h-[685px] shrink-0 flex-col bg-[#f0f0f0] pt-[4px] pl-[3px] pr-[2px]">
      <div className="flex flex-1 flex-col border-x border-b border-x-[#9a9a9a] border-b-black bg-white">
        <CandlePane />
        <StochPane />
        <TimeAxis />
      </div>
    </div>
  )
}

function TabBar() {
  return (
    <div className="flex h-[30px] shrink-0 items-start bg-[#f0f0f0] text-[14px] text-[#7c7670]">
      {tabs.map(([t, cls]) => (
        <div key={t} className={`mt-[3px] flex h-[20px] items-center whitespace-nowrap border-r border-[#a8a8a8] ${cls}`}>
          {t}
        </div>
      ))}
      <div className="flex h-[25px] w-[114px] items-center justify-center border-x border-b border-black bg-white text-[#111]">
        EURUSDp,H4
      </div>
      <div className="ml-auto mr-[8px] mt-[7px] flex gap-[19px]">
        <svg width="5" height="10" viewBox="0 0 5 10"><path d="M5 0v10L0 5z" fill="#b4b4b4" /></svg>
        <svg width="5" height="10" viewBox="0 0 5 10"><path d="M0 0v10l5-5z" fill="#b4b4b4" /></svg>
      </div>
    </div>
  )
}

function OrdersTable() {
  return (
    <div className="flex flex-1 bg-[#f0f0f0] text-[14px] text-[#111]">
      <div className="flex w-[21px] shrink-0 flex-col items-center">
        <span className="-mt-[2px] h-[16px] text-[13px] leading-[16px] text-[#222]">x</span>
        <div className="ml-[2px] mt-[4px] w-[15px] flex-1 bg-[#c3d9ef]" />
      </div>
      <div className="flex flex-1 flex-col border-t border-[#a8a8a8]">
        <div className="flex h-[26px] border-b-2 border-[#e0e0e0] bg-[#f7f7f7]">
          {columns.map(([head, , w], i) => (
            <div
              key={i}
              className={`flex items-center border-r-2 border-[#e6e6e6] pt-[2px] ${w} ${
                i === 0 ? "pl-[6px]" : i === 1 ? "justify-end pr-[9px]" : i === 10 ? "justify-end pr-[13px]" : "justify-end pr-[6px]"
              }`}
            >
              {head}
              {i === 1 && (
                <svg width="4" height="7" viewBox="0 0 4 7" className="ml-[12px]">
                  <path d="M0 7L3.500 0" stroke="#999" />
                </svg>
              )}
            </div>
          ))}
        </div>
        <div className="flex h-[26px] bg-white">
          {columns.map(([, val, w], i) => (
            <div
              key={i}
              className={`flex items-center border-r border-[#d0d0d0] ${w} ${
                i === 0 ? "pl-[3px]" : i === 11 ? "justify-end pr-[6px]" : i === 12 ? "justify-end pr-[17px]" : "justify-end pr-[5px]"
              }`}
            >
              {i === 0 && (
                <svg width="19" height="22" viewBox="0 0 19 22" className="mr-[5px]" fill="none">
                  <path d="M2.500 1.500h8l4 4v14h-12z" fill="#fbfbfb" stroke="#666" />
                  <circle cx="12" cy="16" r="4.500" fill="#3c8fdc" stroke="#1f5f9f" />
                </svg>
              )}
              {val}
              {i === 11 && (
                <svg width="12" height="12" viewBox="0 0 12 12" className="ml-[11px]">
                  <path d="M1 1l10 10M11 1L1 11" stroke="#999" strokeWidth="1.800" />
                </svg>
              )}
            </div>
          ))}
        </div>
        <div className="flex-1 bg-[#c8c8c8]" />
      </div>
    </div>
  )
}

export default function App() {
  return (
    <div className="flex h-[893px] w-[1916px] flex-col overflow-hidden bg-[#f0f0f0] font-['Liberation_Sans',Arial,sans-serif]">
      <TitleBar />
      <MenuBar />
      <MainToolbar />
      <DrawToolbar />
      <ChartWindow />
      <TabBar />
      <OrdersTable />
    </div>
  )
}
